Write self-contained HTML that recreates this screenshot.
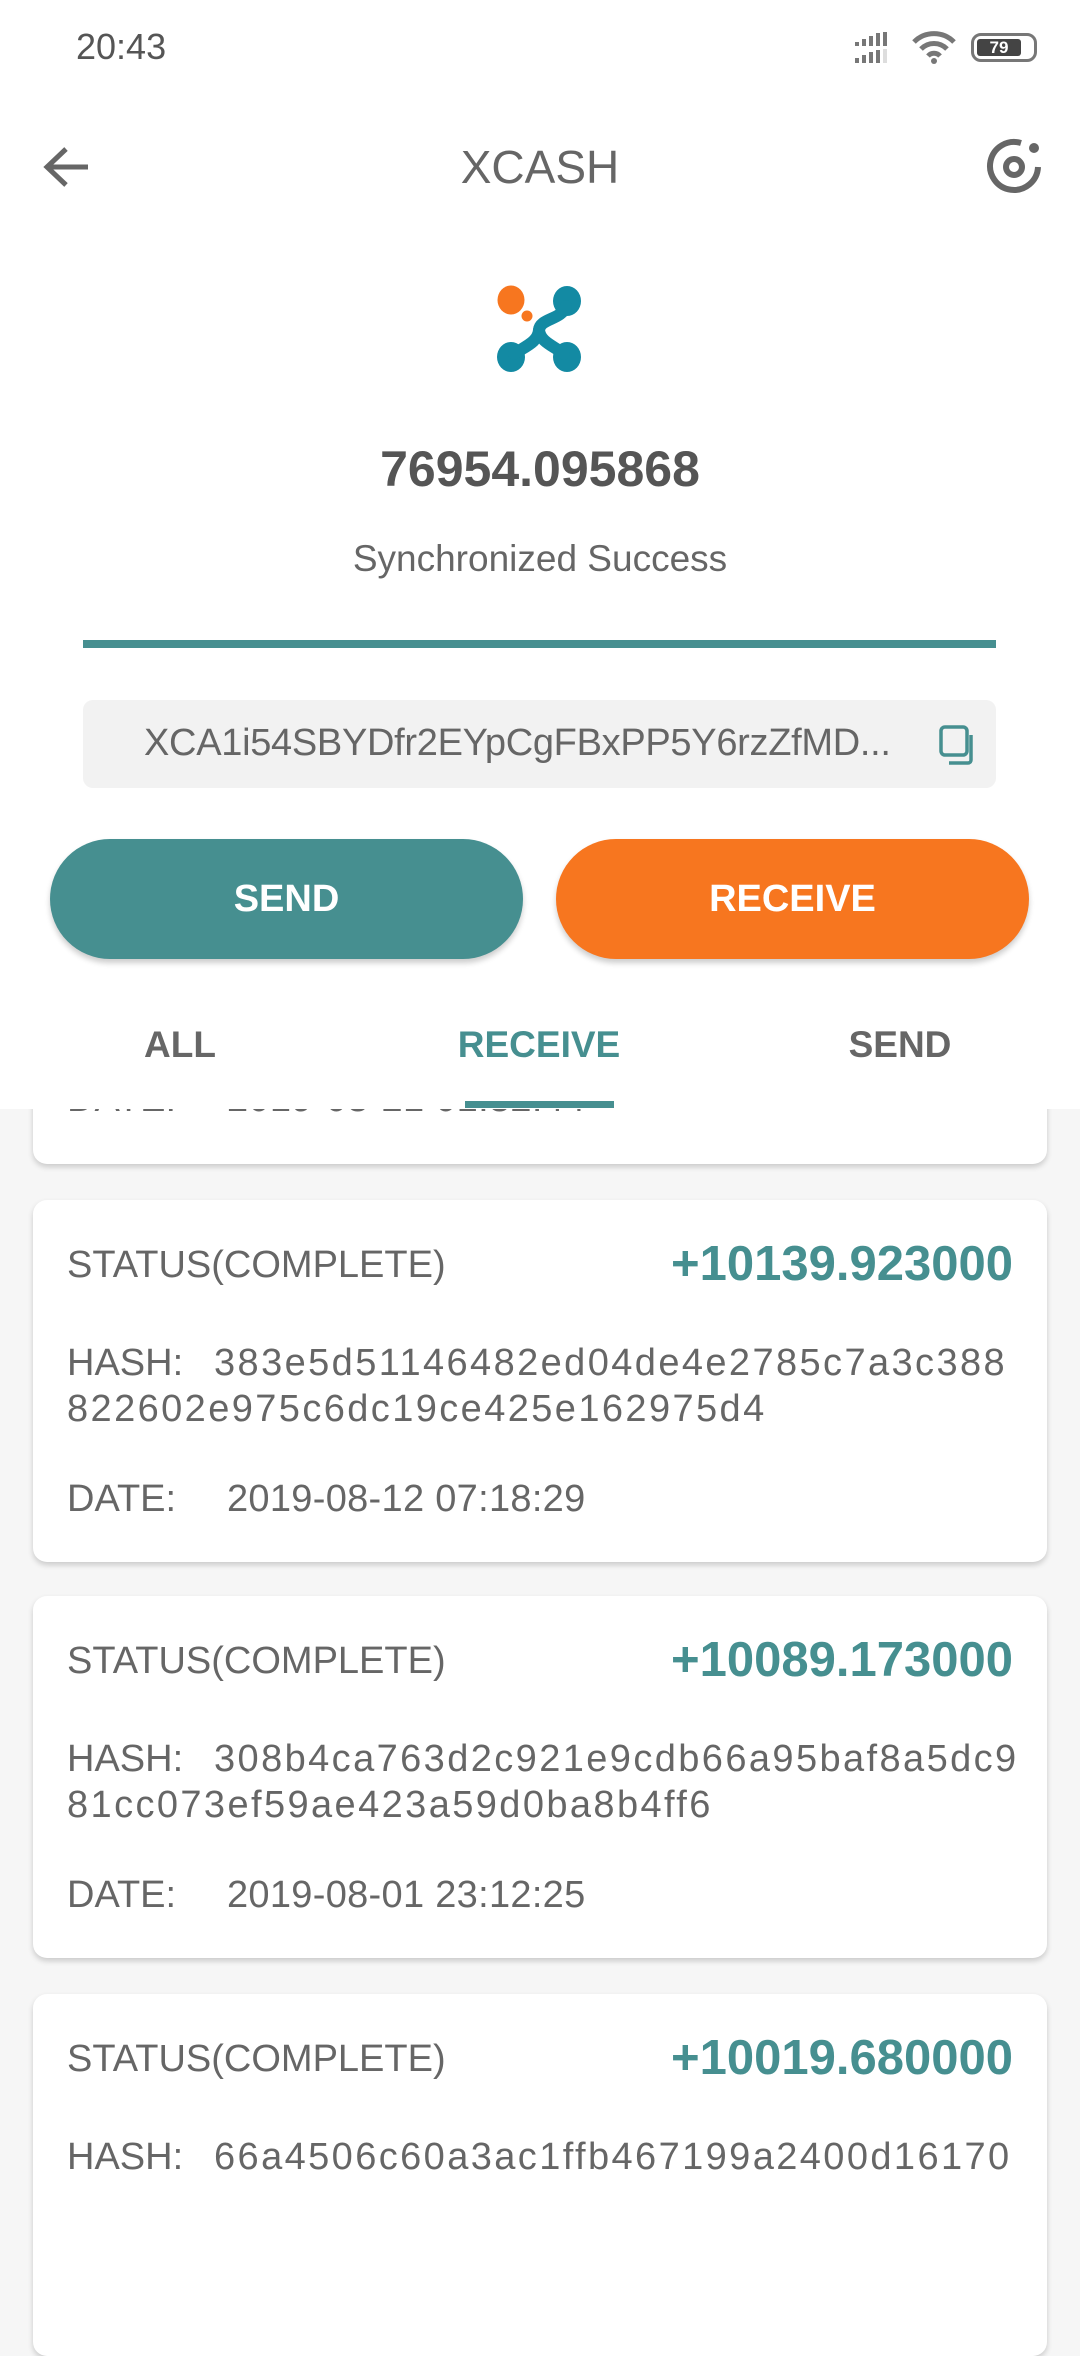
<!DOCTYPE html>
<html><head><meta charset="utf-8"><style>
*{margin:0;padding:0;box-sizing:border-box}
body{width:1080px;height:2158px;overflow:hidden;background:#f6f6f6;font-family:"Liberation Sans",sans-serif;color:#666;position:relative}
.abs{position:absolute}
.header{position:absolute;left:0;top:0;width:1080px;height:1109px;background:#fff;z-index:2}
.card{position:absolute;left:33px;width:1014px;background:#fff;border-radius:14px;box-shadow:0 3px 6px rgba(0,0,0,0.18)}
.card .st{position:absolute;left:34px;top:44px;font-size:38px;color:#666;letter-spacing:0}
.card .amt{position:absolute;right:34px;top:36px;font-size:49px;font-weight:bold;color:#468f90}
.card .hash{position:absolute;left:34px;top:140px;width:990px;font-size:38px;line-height:46px;color:#666;letter-spacing:2.4px;white-space:nowrap}
.card .date{position:absolute;left:34px;top:278px;font-size:38px;color:#666;letter-spacing:0.3px}
.lbl{display:inline-block;width:160px;letter-spacing:0}
</style></head><body>
<div class="card" style="top:900px;height:264px">
 <div class="date" style="top:178px"><span class="lbl">DATE:</span>2019-08-21 01:32:44</div>
</div>
<div class="header">
 <div class="abs" style="left:76px;top:26px;font-size:36px;color:#555">20:43</div>
 <svg class="abs" style="left:855px;top:32px" width="50" height="32" viewBox="0 0 50 32">
  <g fill="#777"><rect x="0" y="10" width="4" height="4"/><rect x="7" y="7" width="4" height="7"/><rect x="14" y="4" width="4" height="10"/><rect x="21" y="1" width="4" height="13"/><rect x="28" y="0" width="4" height="14"/>
  <rect x="0" y="26" width="4" height="5"/><rect x="7" y="23" width="4" height="8"/><rect x="14" y="20" width="4" height="11"/><rect x="21" y="18" width="4" height="13"/></g><rect x="28" y="17" width="4" height="14" fill="#ddd"/>
 </svg>
 <svg class="abs" style="left:912px;top:30px" width="44" height="34" viewBox="0 0 44 34"><path d="M2 12 A28 28 0 0 1 42 12" stroke="#777" stroke-width="5" fill="none"/><path d="M9 19 A18 18 0 0 1 35 19" stroke="#777" stroke-width="5" fill="none"/><path d="M16 26 A8 8 0 0 1 28 26" stroke="#777" stroke-width="5" fill="none"/><circle cx="22" cy="31" r="3" fill="#777"/></svg>
 <div class="abs" style="left:971px;top:33px;width:66px;height:29px;border:3px solid #777;border-radius:10px"><div style="position:absolute;left:3px;top:3px;width:44px;height:17px;background:#444;border-radius:3px;color:#fff;font-size:17px;font-weight:bold;line-height:17px;text-align:center">79</div></div>
 <svg class="abs" style="left:42px;top:145px" width="50" height="44" viewBox="0 0 50 44"><path d="M46 22 H6 M24 4 L5 22 L24 40" stroke="#666" stroke-width="5" fill="none"/></svg>
 <div class="abs" style="left:0;width:1080px;top:140px;text-align:center;font-size:46px;color:#666">XCASH</div>
 <svg class="abs" style="left:984px;top:137px" width="60" height="60" viewBox="0 0 60 60"><path d="M37 6 A24 24 0 1 0 54 30" stroke="#666" stroke-width="6" fill="none"/><circle cx="30" cy="30" r="8" stroke="#666" stroke-width="6" fill="none"/><circle cx="50" cy="11" r="5" fill="#666"/></svg>
 <svg class="abs" style="left:496px;top:284px" width="88" height="90" viewBox="0 0 88 90">
  <ellipse cx="15" cy="16" rx="13.5" ry="14.5" fill="#f7761f"/><circle cx="31" cy="32" r="5.5" fill="#f7761f"/>
  <g fill="#138aa3"><ellipse cx="71" cy="17" rx="14" ry="15"/><ellipse cx="15" cy="73" rx="14" ry="15"/><ellipse cx="71" cy="73" rx="14" ry="15"/></g>
  <g stroke="#138aa3" stroke-width="12" fill="none" stroke-linecap="round"><path d="M70 22 C66 36 44 34 43 46 C42 58 30 62 18 70"/><path d="M43 46 C44 58 58 62 68 70"/></g>
 </svg>
 <div class="abs" style="left:0;width:1080px;top:440px;text-align:center;font-size:50px;font-weight:bold;color:#555">76954.095868</div>
 <div class="abs" style="left:0;width:1080px;top:538px;text-align:center;font-size:37px;color:#666">Synchronized Success</div>
 <div class="abs" style="left:83px;top:640px;width:913px;height:8px;background:#468f90"></div>
 <div class="abs" style="left:83px;top:700px;width:913px;height:88px;background:#f2f2f2;border-radius:10px"></div>
 <div class="abs" style="left:144px;top:722px;font-size:38px;color:#666;letter-spacing:-0.3px">XCA1i54SBYDfr2EYpCgFBxPP5Y6rzZfMD...</div>
 <svg class="abs" style="left:938px;top:724px" width="42" height="42" viewBox="0 0 42 42"><rect x="3" y="3" width="26" height="28" rx="4" stroke="#468f90" stroke-width="3.5" fill="none"/><path d="M33 11 V36 a3 3 0 0 1 -3 3 H11" stroke="#468f90" stroke-width="3.5" fill="none"/></svg>
 <div class="abs" style="left:50px;top:839px;width:473px;height:120px;background:#468f90;border-radius:60px;box-shadow:0 4px 6px rgba(0,0,0,0.2);color:#fff;font-weight:bold;font-size:38px;line-height:120px;text-align:center">SEND</div>
 <div class="abs" style="left:556px;top:839px;width:473px;height:120px;background:#f7761f;border-radius:60px;box-shadow:0 4px 6px rgba(0,0,0,0.2);color:#fff;font-weight:bold;font-size:38px;line-height:120px;text-align:center">RECEIVE</div>
 <div class="abs" style="left:80px;width:200px;top:1024px;text-align:center;font-size:37px;font-weight:bold;color:#666">ALL</div>
 <div class="abs" style="left:439px;width:200px;top:1024px;text-align:center;font-size:37px;font-weight:bold;color:#468f90">RECEIVE</div>
 <div class="abs" style="left:800px;width:200px;top:1024px;text-align:center;font-size:37px;font-weight:bold;color:#666">SEND</div>
 <div class="abs" style="left:465px;top:1101px;width:149px;height:7px;background:#468f90"></div>
</div>
<div class="card" style="top:1200px;height:362px">
 <div class="st">STATUS(COMPLETE)</div><div class="amt">+10139.923000</div>
 <div class="hash"><span class="lbl" style="width:147px">HASH:</span>383e5d51146482ed04de4e2785c7a3c388<br>822602e975c6dc19ce425e162975d4</div>
 <div class="date"><span class="lbl">DATE:</span>2019-08-12 07:18:29</div>
</div>
<div class="card" style="top:1596px;height:362px">
 <div class="st">STATUS(COMPLETE)</div><div class="amt">+10089.173000</div>
 <div class="hash"><span class="lbl" style="width:147px">HASH:</span>308b4ca763d2c921e9cdb66a95baf8a5dc9<br>81cc073ef59ae423a59d0ba8b4ff6</div>
 <div class="date"><span class="lbl">DATE:</span>2019-08-01 23:12:25</div>
</div>
<div class="card" style="top:1994px;height:362px">
 <div class="st">STATUS(COMPLETE)</div><div class="amt">+10019.680000</div>
 <div class="hash"><span class="lbl" style="width:147px">HASH:</span>66a4506c60a3ac1ffb467199a2400d16170</div>
</div>
</body></html>
